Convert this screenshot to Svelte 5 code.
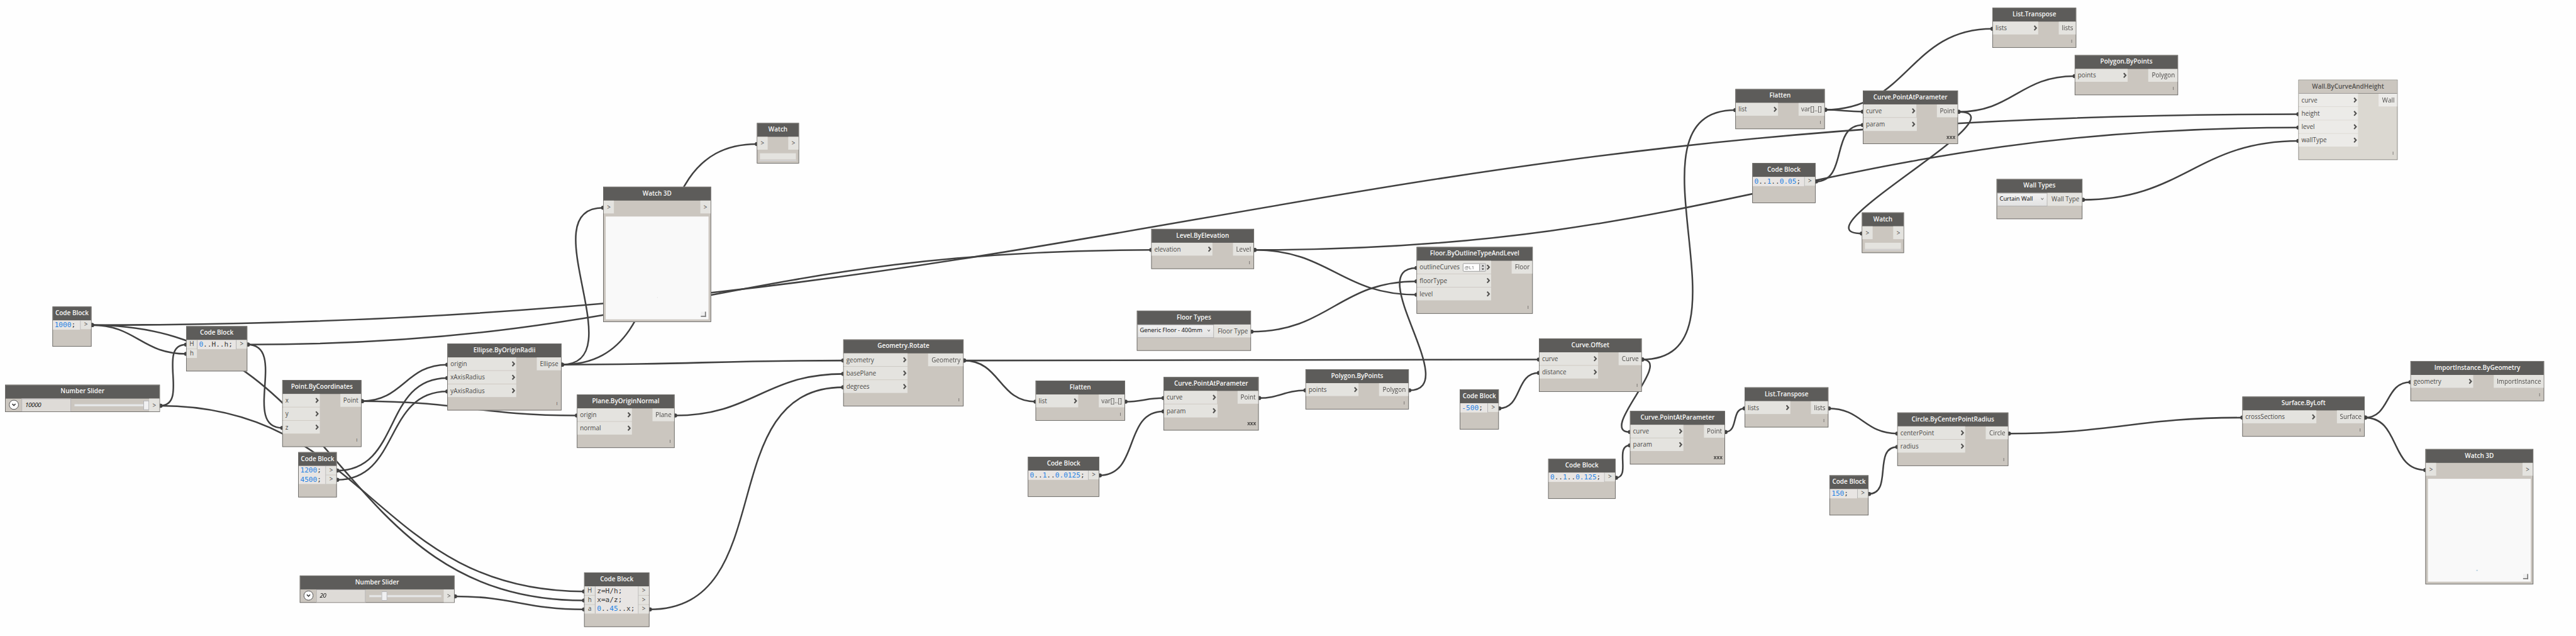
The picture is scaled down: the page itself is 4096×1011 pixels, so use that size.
<script>
  const W = 5010;
  const H = 1236;

  // x, y, w: frame. ins / out: port labels. iw / ow: port column widths.
  const nodes = [
    { kind: 'code', x: 102, y: 596, w: 76, title: 'Code Block', ins: [], lines: ['1000;'], outs: 1 },
    { kind: 'code', x: 362, y: 634, w: 119, title: 'Code Block', ins: ['H', 'h'], lines: ['0..H..h;'], outs: 1 },
    { kind: 'slider', x: 10, y: 748, w: 301, title: 'Number Slider', value: '10000', pos: 141 },
    { kind: 'fn', x: 549, y: 739, w: 154, title: 'Point.ByCoordinates', ins: ['x', 'y', 'z'], out: 'Point', iw: 72, ow: 40, lace: '|' },
    { kind: 'fn', x: 870, y: 668, w: 222, title: 'Ellipse.ByOriginRadii', ins: ['origin', 'xAxisRadius', 'yAxisRadius'], out: 'Ellipse', iw: 133, ow: 47, lace: '|' },
    { kind: 'fn', x: 1122, y: 767, w: 190, title: 'Plane.ByOriginNormal', ins: ['origin', 'normal'], out: 'Plane', iw: 106, ow: 42, lace: '|' },
    { kind: 'code', x: 580, y: 879, w: 75, title: 'Code Block', ins: [], lines: ['1200;', '4500;'], outs: 2 },
    { kind: 'view', x: 1173, y: 363, w: 210, title: 'Watch 3D', dot: 'gray', dx: 100, dy: 157 },
    { kind: 'watch', x: 1472, y: 239, w: 82, title: 'Watch' },
    { kind: 'slider', x: 583, y: 1119, w: 301, title: 'Number Slider', value: '20', pos: 31 },
    { kind: 'code', x: 1136, y: 1113, w: 127, title: 'Code Block', ins: ['H', 'h', 'a'], lines: ['z=H/h;', 'x=a/z;', '0..45..x;'], outs: 3 },
    { kind: 'fn', x: 1640, y: 660, w: 234, title: 'Geometry.Rotate', ins: ['geometry', 'basePlane', 'degrees'], out: 'Geometry', iw: 124, ow: 68, lace: '|' },
    { kind: 'fn', x: 2014, y: 740, w: 174, title: 'Flatten', ins: ['list'], out: 'var[]..[]', iw: 82, ow: 50, lace: '|' },
    { kind: 'fn', x: 2263, y: 733, w: 185, title: 'Curve.PointAtParameter', ins: ['curve', 'param'], out: 'Point', iw: 103, ow: 40, lace: 'xxx' },
    { kind: 'fn', x: 2539, y: 718, w: 201, title: 'Polygon.ByPoints', ins: ['points'], out: 'Polygon', iw: 102, ow: 57, lace: '|' },
    { kind: 'code', x: 1999, y: 888, w: 139, title: 'Code Block', ins: [], lines: ['0..1..0.0125;'], outs: 1 },
    { kind: 'pick', x: 2211, y: 604, w: 222, title: 'Floor Types', value: 'Generic Floor - 400mm', out: 'Floor Type', ow: 71 },
    { kind: 'fn', x: 2239, y: 445, w: 200, title: 'Level.ByElevation', ins: ['elevation'], out: 'Level', iw: 118, ow: 40, lace: '|' },
    { kind: 'fn', x: 2755, y: 480, w: 226, title: 'Floor.ByOutlineTypeAndLevel', ins: ['outlineCurves', 'floorType', 'level'], out: 'Floor', iw: 144, ow: 40, lace: '|', level: '@L1' },
    { kind: 'fn', x: 2993, y: 658, w: 200, title: 'Curve.Offset', ins: ['curve', 'distance'], out: 'Curve', iw: 114, ow: 44, lace: '|' },
    { kind: 'code', x: 2839, y: 757, w: 76, title: 'Code Block', ins: [], lines: ['-500;'], outs: 1 },
    { kind: 'fn', x: 3170, y: 799, w: 185, title: 'Curve.PointAtParameter', ins: ['curve', 'param'], out: 'Point', iw: 103, ow: 40, lace: 'xxx' },
    { kind: 'code', x: 3011, y: 892, w: 131, title: 'Code Block', ins: [], lines: ['0..1..0.125;'], outs: 1 },
    { kind: 'fn', x: 3393, y: 753, w: 163, title: 'List.Transpose', ins: ['lists'], out: 'lists', iw: 88, ow: 33, lace: '|' },
    { kind: 'fn', x: 3690, y: 802, w: 216, title: 'Circle.ByCenterPointRadius', ins: ['centerPoint', 'radius'], out: 'Circle', iw: 131, ow: 43, lace: '|' },
    { kind: 'code', x: 3558, y: 924, w: 76, title: 'Code Block', ins: [], lines: ['150;'], outs: 1 },
    { kind: 'fn', x: 3875, y: 15, w: 163, title: 'List.Transpose', ins: ['lists'], out: 'lists', iw: 88, ow: 33, lace: '|' },
    { kind: 'fn', x: 4035, y: 107, w: 201, title: 'Polygon.ByPoints', ins: ['points'], out: 'Polygon', iw: 102, ow: 57, lace: '|' },
    { kind: 'fn', x: 3375, y: 173, w: 174, title: 'Flatten', ins: ['list'], out: 'var[]..[]', iw: 82, ow: 50, lace: '|' },
    { kind: 'fn', x: 3623, y: 176, w: 185, title: 'Curve.PointAtParameter', ins: ['curve', 'param'], out: 'Point', iw: 103, ow: 40, lace: 'xxx' },
    { kind: 'code', x: 3408, y: 317, w: 123, title: 'Code Block', ins: [], lines: ['0..1..0.05;'], outs: 1 },
    { kind: 'watch', x: 3621, y: 413, w: 82, title: 'Watch' },
    { kind: 'pick', x: 3883, y: 348, w: 167, title: 'Wall Types', value: 'Curtain Wall', out: 'Wall Type', ow: 67 },
    { kind: 'fn', x: 4470, y: 155, w: 193, title: 'Wall.ByCurveAndHeight', ins: ['curve', 'height', 'level', 'wallType'], out: 'Wall', iw: 115, ow: 36, lace: '|', idle: true },
    { kind: 'fn', x: 4361, y: 771, w: 238, title: 'Surface.ByLoft', ins: ['crossSections'], out: 'Surface', iw: 143, ow: 53, lace: '|' },
    { kind: 'fn', x: 4688, y: 702, w: 260, title: 'ImportInstance.ByGeometry', ins: ['geometry'], out: 'ImportInstance', iw: 121, ow: 97, lace: '|' },
    { kind: 'view', x: 4717, y: 873, w: 210, title: 'Watch 3D', dot: 'blue', dx: 94, dy: 177 }
  ];

  // Wires: start x, y, end x, y
  const wires = [
    [178, 632, 362, 688], [178, 632, 1136, 1167.5], [178, 632, 4470, 222],
    [481, 670, 549, 832], [481, 670, 2239, 486],
    [311, 789, 362, 670], [311, 789, 1136, 1150],
    [703, 780, 870, 709], [703, 780, 1122, 808],
    [655, 915, 870, 735], [655, 933, 870, 761],
    [1092, 709, 1173, 404], [1092, 709, 1472, 280], [1092, 709, 1640, 701],
    [1312, 808, 1640, 727], [1263, 1185, 1640, 753], [884, 1159.5, 1136, 1185],
    [1874, 701, 2014, 781], [1874, 701, 2993, 699],
    [2188, 781, 2263, 774], [2138, 924.5, 2263, 800], [2448, 774, 2539, 759], [2740, 759, 2755, 521],
    [2439, 486, 2755, 573], [2439, 486, 4470, 248], [2433, 645, 2755, 547],
    [3193, 699, 3170, 840], [3193, 699, 3375, 214], [2915, 794, 2993, 725],
    [3142, 929, 3170, 866], [3355, 840, 3393, 794], [3556, 794, 3690, 843],
    [3634, 960.5, 3690, 869], [3906, 843, 4361, 812], [4599, 812, 4688, 743], [4599, 812, 4717, 914],
    [3549, 213.5, 3623, 217], [3549, 213.5, 3875, 56], [3531, 353, 3623, 243],
    [3808, 217.5, 4035, 148], [3808, 217.5, 3621, 454], [4050, 388.5, 4470, 274]
  ];

  // Horizontal tangents whose length grows with the distance between ports
  function curve([x0, y0, x1, y1]) {
    const k = 0.45 * Math.hypot(x1 - x0, y1 - y0);
    return `M${x0} ${y0}C${x0 + k} ${y0} ${x1 - k} ${y1} ${x1} ${y1}`;
  }

  // Split a code line into numeric literals and everything else
  function tokens(line) {
    return line.match(/-?\d+(?:\.\d+)?|\.\.|[^\d.-]+/g).map((t) => ({ t, num: /\d/.test(t) }));
  }
</script>

{#snippet chevron()}
  <svg class="chev" viewBox="0 0 8 11"><path d="M1.4 1.1 L5.3 5.5 L1.4 9.9" /></svg>
{/snippet}

<div class="stage">
  <div class="canvas">
    <svg class="wires" viewBox="0 0 {W} {H}">
      {#each wires as w}
        <path d={curve(w)} />
        <circle cx={w[0] + 1} cy={w[1]} r="4" />
        <circle cx={w[2]} cy={w[3]} r="4" />
      {/each}
    </svg>

    {#each nodes as n}
      <section
        class="node {n.kind}"
        class:idle={n.idle}
        style="left:{n.x}px;top:{n.y}px;width:{n.w}px;--iw:{n.iw ?? 20}px;--ow:{n.ow ?? 20}px"
      >
        <header>{n.title}</header>

        {#if n.kind === 'fn'}
          <div class="row">
            <div class="ins">
              {#each n.ins as p, i}
                <div class="port">
                  <span>{p}</span>
                  {#if n.level && i === 0}
                    <span class="spin">
                      <span class="lv">{n.level}</span>
                      <span class="btns"><i class="up"></i><i class="down"></i></span>
                    </span>
                  {/if}
                  {@render chevron()}
                </div>
              {/each}
            </div>
            <div class="port out">{n.out}</div>
          </div>
          <footer class:bold={n.lace === 'xxx'}>{n.lace}</footer>
        {:else if n.kind === 'code'}
          <div class="row">
            {#if n.ins.length}
              <div class="cports">
                {#each n.ins as p}<div class="cport">{p}</div>{/each}
              </div>
            {/if}
            <div class="src" class:inner={n.ins.length}>
              {#each n.lines as line}
                <div class="line">{#each tokens(line) as k}<span class:num={k.num}>{k.t}</span>{/each}</div>
              {/each}
            </div>
            <div class="cports">
              {#each { length: n.outs } as _}<div class="cport">&gt;</div>{/each}
            </div>
          </div>
        {:else if n.kind === 'slider'}
          <div class="row srow">
            <svg class="expand" viewBox="0 0 20 20">
              <circle cx="10" cy="10" r="9" />
              <path d="M6.8 8.2 L10 11.4 L13.2 8.2" />
            </svg>
            <div class="value">{n.value}</div>
            <div class="range">
              <div class="track"></div>
              <div class="thumb" style="margin-left:{n.pos}px"></div>
            </div>
            <div class="tiny">&gt;</div>
          </div>
        {:else if n.kind === 'pick'}
          <div class="row">
            <div class="select">
              <span>{n.value}</span>
              <svg viewBox="0 0 8 8"><path d="M1.8 2 L4 5.4 L6.2 2" /></svg>
            </div>
            <div class="port out">{n.out}</div>
          </div>
        {:else}
          <div class="row">
            <div class="tiny">&gt;</div>
            <div class="tiny">&gt;</div>
          </div>
          {#if n.kind === 'view'}
            <div class="screen">
              <i class="speck {n.dot}" style="left:{n.dx}px;top:{n.dy}px"></i>
              <i class="grip"></i>
            </div>
          {:else}
            <div class="field"></div>
            <div class="bar"></div>
          {/if}
        {/if}
      </section>
    {/each}
  </div>
</div>

<style>
  :global(body) {
    margin: 0;
    background: #fefefe;
  }
  .stage {
    width: 4096px;
    height: 1011px;
    overflow: hidden;
    background: #fefefe;
  }
  .canvas {
    position: relative;
    width: 5010px;
    height: 1236px;
    transform: scale(0.81757);
    transform-origin: 0 0;
    font-family: 'Open Sans', 'Noto Sans', sans-serif;
    font-size: 12.1px;
    color: #4b4947;
  }
  .wires {
    position: absolute;
    inset: 0;
    width: 5010px;
    height: 1236px;
  }
  .wires path {
    fill: none;
    stroke: #414141;
    stroke-width: 3.1;
  }
  .wires circle {
    fill: #414141;
  }
  .node {
    position: absolute;
    box-sizing: border-box;
    min-height: 78px;
    display: flex;
    flex-direction: column;
    background: #cbc6bf;
    border: 1px solid #5d5c5a;
    white-space: nowrap;
  }
  header {
    box-sizing: border-box;
    height: 26px;
    padding-bottom: 3px;
    display: flex;
    align-items: center;
    justify-content: center;
    background: #5d5c5a;
    color: #fafaf9;
    font-size: 12.2px;
    font-weight: 600;
  }
  .row {
    display: flex;
    justify-content: space-between;
    align-items: flex-start;
  }
  .ins {
    width: var(--iw);
    display: flex;
    flex-direction: column;
    gap: 1px;
  }
  .port {
    box-sizing: border-box;
    height: 25px;
    padding: 0 1px 1px 5px;
    display: flex;
    align-items: center;
    justify-content: space-between;
    background: #e4e3df;
  }
  .out {
    width: var(--ow);
    padding: 0 5px 1px 0;
    justify-content: flex-end;
  }
  .chev {
    width: 8px;
    height: 11px;
    flex: none;
  }
  .chev path {
    fill: none;
    stroke: #535250;
    stroke-width: 2.6;
  }
  footer {
    height: 25px;
    box-sizing: border-box;
    padding: 0 6px 0 0;
    text-align: right;
    font-size: 7px;
    font-weight: 700;
    line-height: 26px;
  }
  footer.bold {
    padding-right: 4px;
    font-size: 10px;
    line-height: 25px;
  }
  .idle {
    background: #dbd8d1;
    border-color: #7f7e7b;
  }
  .idle header {
    background: #cbc6bf;
    color: #53514e;
    border-bottom: 1px solid #7f7e7b;
    padding-bottom: 2px;
  }
  .idle .port {
    background: #ecebe8;
  }

  .code {
    padding-bottom: 25px;
  }
  .cports {
    width: 20px;
    flex: none;
    display: flex;
    flex-direction: column;
    gap: 1px;
  }
  .cport {
    box-sizing: border-box;
    height: 17px;
    padding-bottom: 1px;
    display: flex;
    align-items: center;
    justify-content: center;
    background: #e4e3df;
    line-height: 16px;
  }
  .src {
    flex: 1;
    box-sizing: border-box;
    padding-left: 3px;
    background: #e8e5e3;
    border-right: 1px solid #a9a9aa;
    font-family: 'DejaVu Sans Mono', 'Liberation Mono', monospace;
    font-size: 13.6px;
    color: #383838;
  }
  .src.inner {
    border-left: 1px solid #a9a9aa;
  }
  .line {
    height: 17.6px;
    line-height: 17.6px;
  }
  .num {
    color: #1f82e4;
  }

  .slider {
    min-height: 53px;
  }
  .srow {
    height: 25px;
    align-items: stretch;
  }
  .expand {
    width: 20px;
    height: 20px;
    margin: 2px 5px 0 6px;
    flex: none;
  }
  .expand circle {
    fill: #fff;
    stroke: #4b4b4b;
    stroke-width: 1.2;
  }
  .expand path {
    fill: none;
    stroke: #3a3a3a;
    stroke-width: 2;
  }
  .value {
    box-sizing: border-box;
    width: 96px;
    padding-left: 6px;
    background: #dedbd7;
    border: 1px solid #aeabae;
    border-bottom: 0;
    color: #000;
    font-size: 11.8px;
    font-style: italic;
    letter-spacing: -0.35px;
    line-height: 20px;
  }
  .range {
    flex: 1;
    display: grid;
    align-items: center;
    padding-top: 1px;
  }
  .track {
    grid-area: 1 / 1;
    height: 4px;
    margin: 0 5px 0 7px;
    box-sizing: border-box;
    background: #e9ebec;
    border: 1px solid #dcdcdb;
  }
  .thumb {
    grid-area: 1 / 1;
    box-sizing: border-box;
    width: 11px;
    height: 18px;
    background: #f0f0f1;
    border: 1px solid #a9a9ac;
  }
  .tiny {
    box-sizing: border-box;
    width: 20px;
    height: 25px;
    padding-bottom: 1px;
    display: flex;
    align-items: center;
    justify-content: center;
    background: #e4e3df;
  }

  .select {
    flex: 1;
    box-sizing: border-box;
    height: 26px;
    padding: 0 5px 6px 4px;
    display: flex;
    align-items: center;
    justify-content: space-between;
    background: linear-gradient(#f1f1f1, #e2e2e2);
    border: 1px solid #acacac;
    color: #000;
    font-size: 11.4px;
  }
  .select svg {
    width: 8px;
    height: 8px;
    margin-top: 4px;
  }
  .select path {
    fill: none;
    stroke: #606060;
    stroke-width: 1.2;
  }

  .spin {
    box-sizing: border-box;
    width: 45px;
    height: 16px;
    margin: 1px -6px 0 0;
    display: flex;
    background: #fff;
    border: 1px solid #8a8a8a;
    border-radius: 2px;
    overflow: hidden;
  }
  .lv {
    flex: 1;
    padding-left: 2px;
    color: #666;
    font-size: 9.5px;
    line-height: 14px;
  }
  .btns {
    width: 11px;
    display: flex;
    flex-direction: column;
    justify-content: space-around;
    align-items: center;
    background: #d9d9d9;
    border-left: 1px solid #8a8a8a;
  }
  .up,
  .down {
    border: 2.5px solid transparent;
  }
  .up {
    border-top: 0;
    border-bottom: 3.5px solid #222;
  }
  .down {
    border-bottom: 0;
    border-top: 3.5px solid #222;
  }

  .screen {
    position: relative;
    height: 200px;
    margin: 6px 4px 4px;
    background: #f9f9f9;
  }
  .speck {
    position: absolute;
    width: 1px;
    height: 1px;
    background: #c8c8c8;
  }
  .blue {
    width: 3px;
    height: 2px;
    background: #b5cfde;
  }
  .grip {
    position: absolute;
    right: 5px;
    bottom: 5px;
    width: 10px;
    height: 10px;
    box-sizing: border-box;
    background: #f0f0f0;
    border-right: 2px solid #777;
    border-bottom: 2px solid #777;
  }
  .watch {
    min-height: 79px;
  }
  .field {
    height: 12px;
    margin: 7px 5px 1px;
    background: #e4e3df;
  }
  .bar {
    height: 2px;
    margin: 0 4px;
    background: #d4d3d5;
  }
</style>
